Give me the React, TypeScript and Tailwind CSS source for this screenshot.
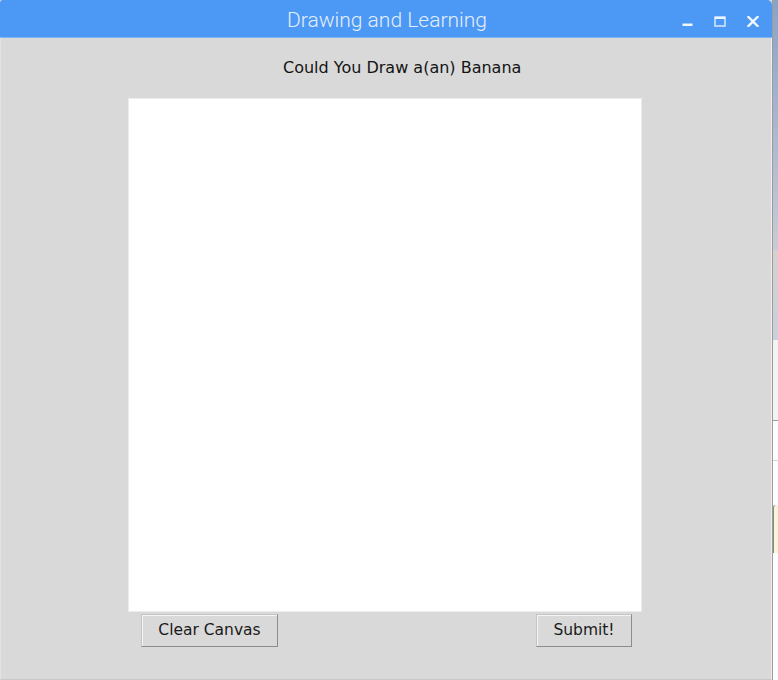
import { useState } from "react";

function TitleButtons() {
  return (
    <div className="absolute right-[13px] top-[16px] flex items-center gap-[21px]">
      <svg width="11" height="11" viewBox="0 0 11 11" aria-hidden>
        <rect x="0.5" y="7.5" width="10" height="2.5" fill="#f2f6fd" />
      </svg>
      <svg width="12" height="11" viewBox="0 0 12 11" aria-hidden>
        <rect x="1" y="1" width="10" height="9" fill="none" stroke="#f2f6fd" strokeWidth="1.3" />
        <rect x="1" y="1" width="10" height="2" fill="#f2f6fd" />
      </svg>
      <svg width="12" height="11" viewBox="0 0 12 11" aria-hidden>
        <path d="M1.5 1 L10.5 10 M10.5 1 L1.5 10" stroke="#f2f6fd" strokeWidth="2.4" strokeLinecap="square" />
      </svg>
    </div>
  );
}

function TkButton({ label, width, onClick }: { label: string; width: string; onClick?: () => void }) {
  return (
    <button
      type="button"
      onClick={onClick}
      className={`${width} h-[33px] border border-t-[#c4c4c4] border-l-[#c4c4c4] border-b-[#8c8c8c] border-r-[#8c8c8c] bg-[#d9d9d9] font-['DejaVu_Sans',sans-serif] text-[15.5px] text-[#1a1a1a] leading-none shadow-[inset_1px_1px_0_#f4f4f4]`}
    >
      {label}
    </button>
  );
}

export default function App() {
  const [cleared, setCleared] = useState(0);

  return (
    <div className="flex h-[680px] w-[778px] overflow-hidden bg-[#d4d8e0]">
      <div className="flex w-[773px] shrink-0 flex-col border-r border-r-[#9b9b9b]">
        <div className="relative flex h-[38px] shrink-0 items-center justify-center rounded-tl-[3px] rounded-tr-[5px] border-b border-b-[#7fb4f6] bg-[#4b98f5]">
          <span className="pl-[2px] pt-[4px] font-['Roboto',sans-serif] text-[21px] font-light text-[#e6eefb]">
            Drawing and Learning
          </span>
          <TitleButtons />
        </div>

        <div className="flex flex-1 flex-col border-l border-l-[#e2e2e2] border-r border-r-[#eeeeee] border-b border-b-[#c8c8c8] bg-[#d9d9d9]">
          <div className="pl-[282px] pt-[20px] font-['DejaVu_Sans',sans-serif] text-[16px] leading-[20px] text-[#141414]">
            Could You Draw a(an) Banana
          </div>

          <div
            key={cleared}
            className="ml-[127px] mt-[20px] h-[514px] w-[514px] border border-[#ececec] bg-white"
          />

          <div className="ml-[140px] mt-[2px] flex w-[491px] justify-between">
            <TkButton label="Clear Canvas" width="w-[137px]" onClick={() => setCleared((c) => c + 1)} />
            <TkButton label="Submit!" width="w-[96px]" />
          </div>
        </div>
      </div>

      {/* desktop behind the window */}
      <div className="flex flex-1 flex-col">
        <div className="h-[250px] bg-gradient-to-b from-[#8aa3c4] to-[#c9cbd6]" />
        <div className="h-[90px] bg-gradient-to-b from-[#d9cfd0] to-[#c9d0dc]" />
        <div className="h-[80px] bg-[#f3f3f3]" />
        <div className="h-[40px] border-t border-t-[#9a9a9a] bg-white" />
        <div className="h-[45px] border-t border-t-[#d6d6d6] bg-white" />
        <div className="h-[48px] rounded-tl-[3px] border-l border-l-[#8d8a78] bg-[#fbf4da]" />
        <div className="flex-1 bg-white" />
      </div>
    </div>
  );
}
